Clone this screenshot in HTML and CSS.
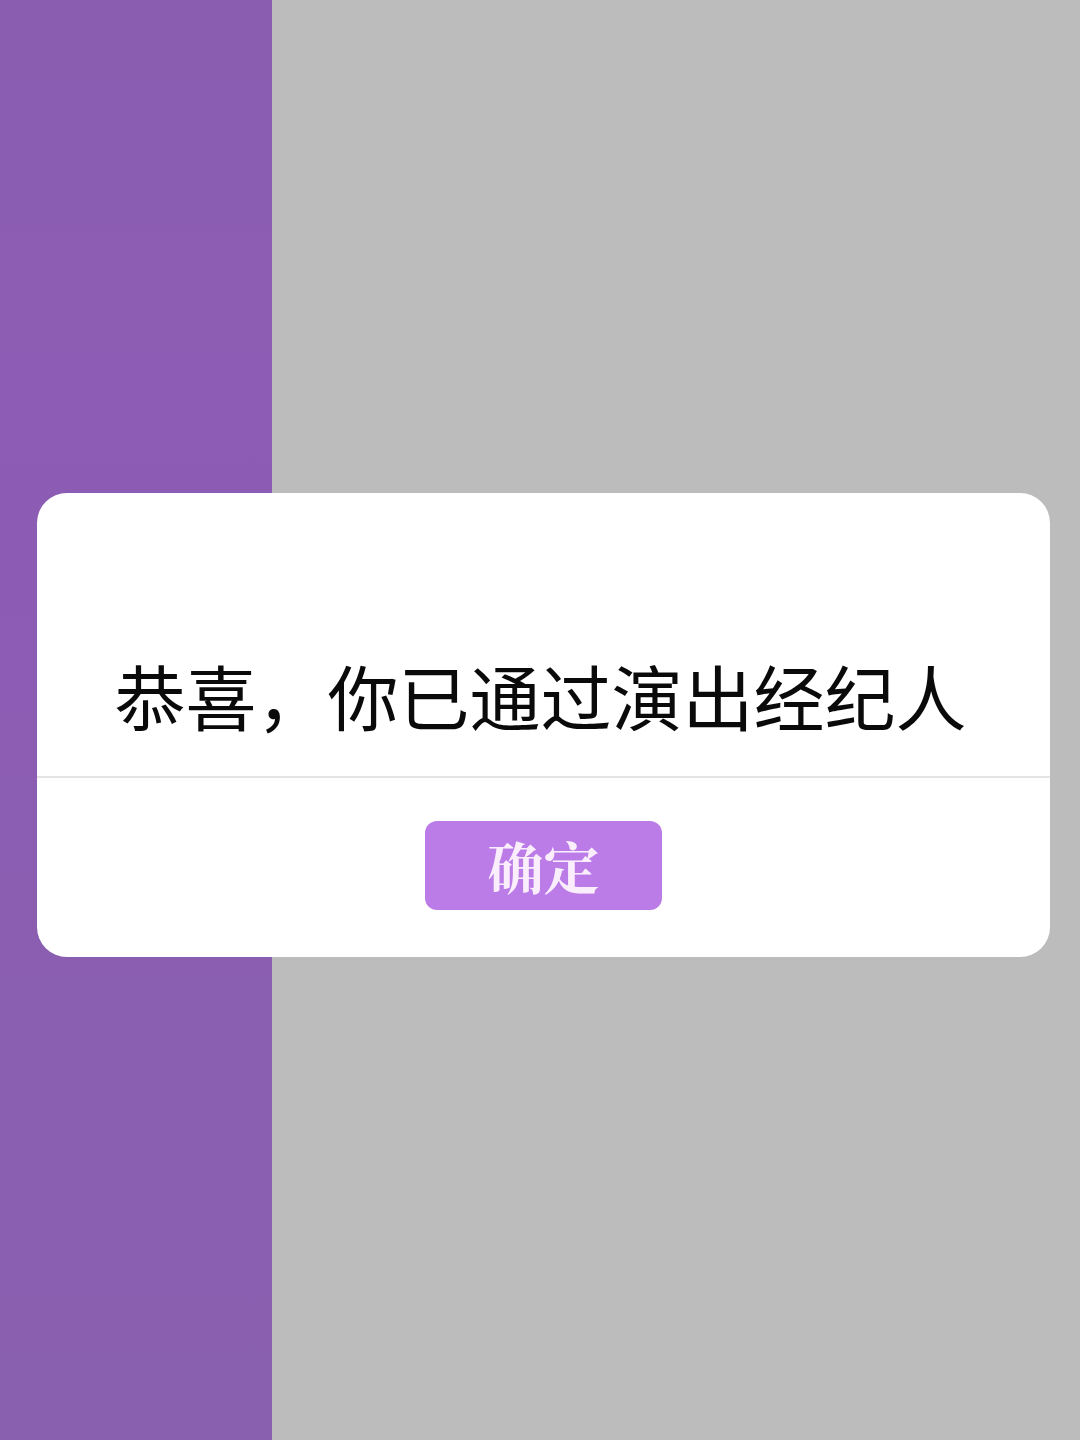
FILE: index.html
```html
<!DOCTYPE html>
<html lang="zh-CN">
<head>
<meta charset="utf-8">
<title>恭喜</title>
<link rel="stylesheet" href="styles.css">
</head>
<body>
  <div class="screen">
    <div class="side"></div>
    <div class="main"></div>
  </div>
  <div class="dialog">
    <div class="dialog-body">
      <p class="message">恭喜，你已通过演出经纪人</p>
    </div>
    <div class="dialog-footer">
      <button class="confirm" type="button">确定</button>
    </div>
  </div>
</body>
</html>
```
FILE: styles.css
```css
html, body {
  margin: 0;
  padding: 0;
}

body {
  width: 1080px;
  height: 1440px;
  overflow: hidden;
  position: relative;
  font-family: "Noto Sans CJK SC", "Noto Sans", sans-serif;
}

.screen {
  display: flex;
  height: 1440px;
}

.side {
  width: 272px;
  background: linear-gradient(180deg, #8a5db1 0%, #8c5cb4 40%, #8a5eb1 70%, #895fb0 100%);
}

.main {
  flex: 1;
  background: #bcbcbc;
}

/* modal alert */
.dialog {
  position: absolute;
  left: 37px;
  top: 493px;
  width: 1013px;
  height: 464px;
  background: #fff;
  border-radius: 30px;
  display: flex;
  flex-direction: column;
}

.dialog-body {
  height: 285px;
  box-sizing: border-box;
  padding-top: 158px;
  border-bottom: 2px solid #e4e4e4;
}

.message {
  margin: 0;
  text-align: center;
  font-size: 71px;
  line-height: 86px;
  color: #0a0a0a;
  font-weight: 400;
  letter-spacing: 0;
  padding-right: 6px;
}

.dialog-footer {
  flex: 1;
  display: flex;
  justify-content: center;
  padding-top: 43px;
  box-sizing: border-box;
}

.confirm {
  width: 237px;
  height: 89px;
  border: none;
  border-radius: 12px;
  background: #bb7ce8;
  color: #fbeefc;
  font-family: "Noto Serif CJK SC", "Noto Sans CJK SC", serif;
  font-size: 56px;
  font-weight: 700;
  line-height: 89px;
  padding: 0;
  letter-spacing: 0;
}
```
